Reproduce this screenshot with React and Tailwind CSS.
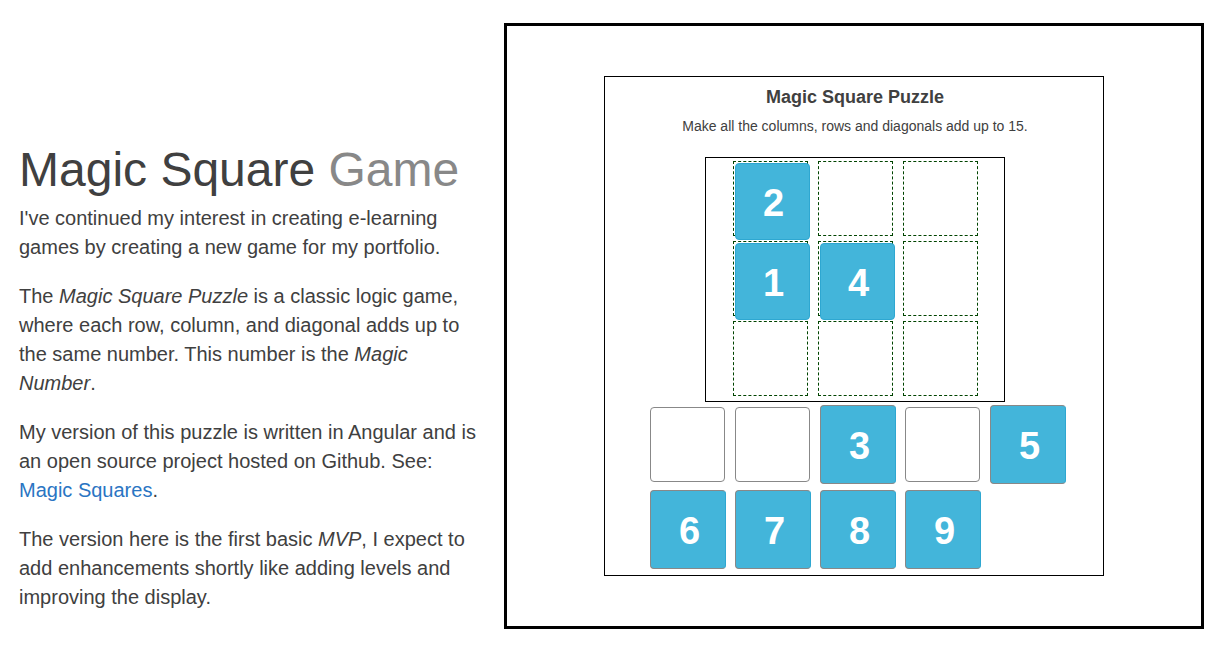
const board = [2, null, null, 1, 4, null, null, null, null];
const tray = [null, null, 3, null, 5, 6, 7, 8, 9];

function BoardCell({ value }) {
  return (
    <div className="h-[75px] w-[75px] border border-dashed border-[#004400]">
      {value && (
        <button
          type="button"
          className="relative left-px top-px block h-[77px] w-[75px] rounded-[4px] border border-[#2ea7d1] bg-[#43b5da] pt-[2px] pl-[2px] text-[38px] leading-none font-bold text-white"
        >
          {value}
        </button>
      )}
    </div>
  );
}

function TrayCell({ value }) {
  if (!value) {
    return <div className="h-[75px] w-[75px] rounded-[4px] border border-[#888888]" />;
  }
  return (
    <button
      type="button"
      className="h-[79px] w-[76px] rounded-[4px] border border-[#888888] border-r-[#2ea7d1] bg-[#43b5da] pt-[2px] pl-[4px] text-[38px] leading-none font-bold text-white"
    >
      {value}
    </button>
  );
}

function Puzzle() {
  return (
    <section className="flex justify-center border-[3px] border-black py-[50px]">
      <div className="flex w-[500px] flex-col items-center border border-black pt-2 pb-[6px]">
        <h2 className="pl-[2px] text-[18px] leading-6 font-bold">Magic Square Puzzle</h2>
        <p className="mt-[7px] pl-[2px] text-[14px] leading-5">
          Make all the columns, rows and diagonals add up to 15.
        </p>
        <div className="mt-[21px] ml-[2px] w-[300px] border border-black pt-[3px] pb-[5px] pl-[27px]">
          <div className="grid w-[245px] grid-cols-3 gap-x-[10px] gap-y-[5px]">
            {board.map((value, i) => (
              <BoardCell key={i} value={value} />
            ))}
          </div>
        </div>
        <div className="mt-[3px] ml-[6px] grid w-[415px] grid-cols-[repeat(5,75px)] items-center gap-x-[10px] gap-y-[6px]">
          {tray.map((value, i) => (
            <TrayCell key={i} value={value} />
          ))}
        </div>
      </div>
    </section>
  );
}

export default function App() {
  return (
    <main className="grid grid-cols-[47fr_70fr] gap-[15px] bg-white pt-[23px] pr-4 pb-[35px] pl-[19px] font-['Liberation_Sans',Arial,sans-serif] text-[#404040]">
      <article className="pt-[121px]">
        <h1 className="text-[48px] leading-[52px] whitespace-nowrap">
          Magic Square <span className="text-[#888888]">Game</span>
        </h1>
        <div className="mt-2 flex flex-col gap-5 text-[20px] leading-[29px]">
          <p>
            I've continued my interest in creating e-learning games by creating a new game for my
            portfolio.
          </p>
          <p>
            The <em>Magic Square Puzzle</em> is a classic logic game, where each row, column, and
            diagonal adds up to the same number. This number is the <em>Magic Number</em>.
          </p>
          <p>
            My version of this puzzle is written in Angular and is an open source project hosted on
            Github. See:{" "}
            <a href="#magic-squares" className="text-[#2a75c3]">
              Magic Squares
            </a>
            .
          </p>
          <p>
            The version here is the first basic <em>MVP</em>, I expect to add enhancements shortly
            like adding levels and improving the display.
          </p>
        </div>
      </article>
      <Puzzle />
    </main>
  );
}
